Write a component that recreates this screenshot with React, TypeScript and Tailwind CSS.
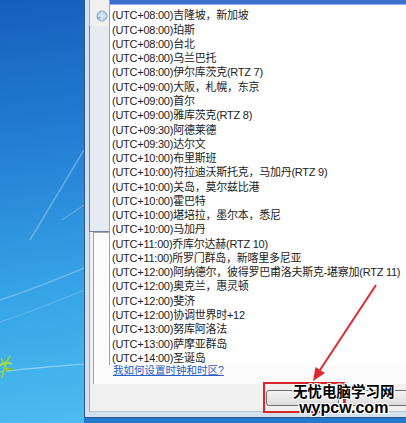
import React from "react";

const rows = [
  "(UTC+08:00)吉隆坡，新加坡",
  "(UTC+08:00)珀斯",
  "(UTC+08:00)台北",
  "(UTC+08:00)乌兰巴托",
  "(UTC+08:00)伊尔库茨克(RTZ 7)",
  "(UTC+09:00)大阪，札幌，东京",
  "(UTC+09:00)首尔",
  "(UTC+09:00)雅库茨克(RTZ 8)",
  "(UTC+09:30)阿德莱德",
  "(UTC+09:30)达尔文",
  "(UTC+10:00)布里斯班",
  "(UTC+10:00)符拉迪沃斯托克，马加丹(RTZ 9)",
  "(UTC+10:00)关岛，莫尔兹比港",
  "(UTC+10:00)霍巴特",
  "(UTC+10:00)堪培拉，墨尔本，悉尼",
  "(UTC+10:00)马加丹",
  "(UTC+11:00)乔库尔达赫(RTZ 10)",
  "(UTC+11:00)所罗门群岛，新喀里多尼亚",
  "(UTC+12:00)阿纳德尔，彼得罗巴甫洛夫斯克-堪察加(RTZ 11)",
  "(UTC+12:00)奥克兰，惠灵顿",
  "(UTC+12:00)斐济",
  "(UTC+12:00)协调世界时+12",
  "(UTC+13:00)努库阿洛法",
  "(UTC+13:00)萨摩亚群岛",
  "(UTC+14:00)圣诞岛",
];

const font = "font-['Liberation_Sans','Noto_Sans_CJK_SC',sans-serif]";

function Desktop() {
  return (
    <div className="relative w-[84px] h-full shrink-0 bg-[linear-gradient(172deg,#155fbc_0%,#2480d4_35%,#38a5e7_70%,#4dbcef_100%)]">
      <svg className="absolute inset-0" width="84" height="423" viewBox="0 0 84 423">
        <path d="M30 240 L84 150" stroke="#cfefff" strokeOpacity="0.35" strokeWidth="1.5" />
        <path d="M0 300 C30 290 60 278 84 268" stroke="#dff4ff" strokeOpacity="0.35" strokeWidth="1.2" fill="none" />
        <path d="M0 322 C30 312 60 300 84 290" stroke="#dff4ff" strokeOpacity="0.25" strokeWidth="1" fill="none" />
        <path d="M0 372 C30 368 60 366 84 364" stroke="#e8fbff" strokeOpacity="0.45" strokeWidth="1.2" fill="none" />
        <path d="M62 220 L84 205" stroke="#ffffff" strokeOpacity="0.3" strokeWidth="1" />
        <g>
          <path d="M2 378 C4 368 6 362 10 356" stroke="#8fd13a" strokeWidth="2" fill="none" />
          <path d="M0 366 C3 362 8 362 12 364" stroke="#a6e04a" strokeWidth="2" fill="none" />
          <path d="M4 372 C7 368 10 368 13 370" stroke="#7cc22e" strokeWidth="2" fill="none" />
          <path d="M1 358 L7 370" stroke="#98d640" strokeWidth="1.5" />
        </g>
      </svg>
    </div>
  );
}

export default function App() {
  return (
    <div className={`relative w-[406px] h-[423px] overflow-hidden flex bg-[#1f7ad0] ${font}`}>
      <Desktop />
      <div className="flex flex-col w-[322px] h-full">
        <div className="flex h-[418px] border-l border-[#34557c] bg-[#d3e0ee] pl-[4px] pb-[5px] border-b border-b-[#2b5583]">
          <div className="flex-1 flex flex-col bg-[#f0f0f0] border-l border-[#9aabbe] border-b border-b-[#b8c5d3]">
            {/* top area */}
            <div className="h-[232px] flex flex-col">
              <div className="h-[26px] flex items-start pl-[6px] pt-[10px]">
                <svg width="12" height="12" viewBox="0 0 12 12">
                  <circle cx="6" cy="6" r="5" fill="#bcd3ea" stroke="#7d9fc3" strokeWidth="1" />
                  <path d="M2 6 H10 M6 1.5 V10.5" stroke="#ffffff" strokeWidth="0.8" />
                  <path d="M1 9 L4 7" stroke="#6aa0d8" strokeWidth="1.2" />
                </svg>
              </div>
              <div className="flex-1 w-[40px] -ml-px bg-[#e6ebf1] border-l border-b border-[#6f7f96]" />
            </div>
            {/* content panel */}
            <div className="h-[152px] ml-[3px] bg-[#fbfbfb] border-l border-t border-[#a5a5a5] flex flex-col justify-end">
              <div className="h-[27px] pl-[19px]">
                <span className="text-[10.5px] leading-[12px] text-[#2660c4] underline">我如何设置时钟和时区?</span>
              </div>
            </div>
            {/* footer */}
            <div className="flex-1 flex items-start pt-[6px] pl-[176px] gap-[6px]">
              <div className="w-[73px] h-[16px] shrink-0 rounded-[3px] border border-[#707070] bg-[linear-gradient(#f4f4f4,#dcdcdc)]" />
              <div className="w-[73px] h-[16px] shrink-0 rounded-[3px] border border-[#707070] bg-[linear-gradient(#f4f4f4,#dcdcdc)]" />
            </div>
          </div>
        </div>
      </div>

      {/* dropdown list overlay */}
      <div className="absolute left-[109px] top-0 right-0 h-[365px] bg-white border-l border-[#9aa3ad] overflow-hidden text-[11px] text-[#222] tracking-[-0.25px]">
        <div className="h-[5px] bg-[#3a70cc] border-b border-[#8fb0e6]" />
        <div className="h-[3.4px]" />
        {rows.map((r) => (
          <div key={r} className="h-[14.27px] leading-[14.27px] pl-[2px] whitespace-nowrap">
            {r}
          </div>
        ))}
      </div>

      {/* red rectangle */}
      <div className="absolute left-[263px] top-[382px] w-[82px] h-[31px] border-2 border-[#d9262b]" />

      {/* red arrow */}
      <svg className="absolute inset-0 pointer-events-none" width="406" height="423" viewBox="0 0 406 423">
        <line x1="376" y1="285" x2="320" y2="370" stroke="#e0282f" strokeWidth="2" />
        <polygon points="313,381 325,373 315.5,367" fill="#e0282f" />
      </svg>

      {/* watermark */}
      <div className="absolute left-[293px] top-[384px] flex flex-col items-center font-['Liberation_Sans','Noto_Sans_CJK_SC',sans-serif] font-bold text-black [text-shadow:1px_0_0_#fff,-1px_0_0_#fff,0_1px_0_#fff,0_-1px_0_#fff,1px_1px_0_#fff,-1px_-1px_0_#fff,1px_-1px_0_#fff,-1px_1px_0_#fff]">
        <div className="text-[14.5px] leading-[17px] tracking-[0px]">无忧电脑学习网</div>
        <div className="text-[16px] leading-[14px]">wypcw.com</div>
      </div>
    </div>
  );
}
